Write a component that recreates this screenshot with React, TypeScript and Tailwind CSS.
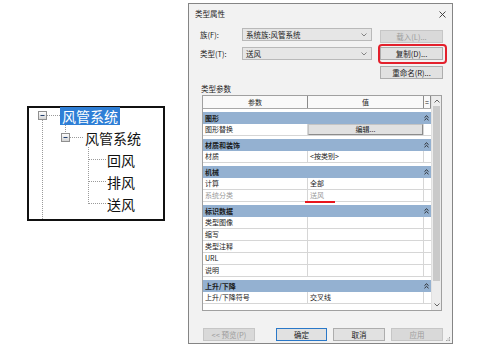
import React from "react";

function Chevron() {
  return (
    <svg width="6" height="4" viewBox="0 0 6 4">
      <path d="M0.5 0.5 L3 3 L5.5 0.5" fill="none" stroke="#6a6a6a" strokeWidth="0.8" />
    </svg>
  );
}

function Dropdown({ text }: { text: string }) {
  return (
    <div className="w-[130px] h-[13px] border border-[#b9b9b9] bg-[#e6e6e6] flex items-center justify-between pl-[3px] pr-[4px] text-[7.5px] leading-none">
      <span>{text}</span>
      <Chevron />
    </div>
  );
}

function Btn({
  children,
  disabled,
  primary,
  w,
}: {
  children: React.ReactNode;
  disabled?: boolean;
  primary?: boolean;
  w: string;
}) {
  const base = "h-[13px] flex items-center justify-center text-[7.5px] leading-none border ";
  const style = disabled
    ? "bg-[#d9d9d9] border-[#c6c6c6] text-[#9c9c9c]"
    : primary
    ? "bg-[#e1e1e1] border-[#2a78c8] text-[#1a1a1a]"
    : "bg-[#e1e1e1] border-[#adadad] text-[#1a1a1a]";
  return <div className={base + style + " " + w}>{children}</div>;
}

function Collapse() {
  return (
    <svg width="5" height="6" viewBox="0 0 5 6">
      <path d="M0.5 2.6 L2.5 0.8 L4.5 2.6" fill="none" stroke="#1f1f1f" strokeWidth="0.9" />
      <path d="M0.5 5.2 L2.5 3.4 L4.5 5.2" fill="none" stroke="#1f1f1f" strokeWidth="0.9" />
    </svg>
  );
}

function Group({ label }: { label: string }) {
  return (
    <div className="mt-[3px] h-[12px] bg-[#94b1d1] flex items-center justify-between pl-[2px] pr-[2px] text-[7px] font-bold leading-none text-[#1a1a1a]">
      <span>{label}</span>
      <Collapse />
    </div>
  );
}

function Row({
  p,
  v,
  gray,
  mark,
  edit,
}: {
  p: string;
  v?: string;
  gray?: boolean;
  mark?: boolean;
  edit?: boolean;
}) {
  return (
    <div className="h-[12px] flex border-b border-[#d6d6d6] bg-white text-[7px] leading-none">
      <div
        className={
          "w-[105px] border-r border-[#d6d6d6] pl-[2px] flex items-center " +
          (gray ? "text-[#9a9a9a]" : "text-[#1a1a1a]")
        }
      >
        {p}
      </div>
      <div className="w-[116px] border-r border-[#d6d6d6] relative flex items-center">
        {edit ? (
          <div className="w-full h-full bg-[#e1e1e1] border border-[#c4c4c4] border-r-[#8c8c8c] border-b-[#8c8c8c] flex items-center justify-center text-[#1a1a1a]">
            编辑...
          </div>
        ) : (
          <span className={"pl-[2px] " + (gray ? "text-[#9a9a9a]" : "text-[#1a1a1a]")}>{v}</span>
        )}
        {mark && <span className="absolute left-[-3px] bottom-[-2px] w-[30px] h-[2px] bg-[#e8151c]" />}
      </div>
      <div className="w-[7px]" />
    </div>
  );
}

function Tree() {
  const dot = { stroke: "#9a9a9a", strokeWidth: 1, strokeDasharray: "1 1" };
  return (
    <div className="relative w-[138px] h-[115px] border-2 border-[#111] bg-white">
      <svg className="absolute left-0 top-0" width="134" height="111">
        <defs>
          <linearGradient id="mb" x1="0" y1="0" x2="0" y2="1">
            <stop offset="0" stopColor="#ffffff" />
            <stop offset="1" stopColor="#d2d2d2" />
          </linearGradient>
        </defs>
        <line x1="13.5" y1="12" x2="13.5" y2="111" {...dot} />
        <line x1="18" y1="7.5" x2="31" y2="7.5" {...dot} />
        <line x1="36.5" y1="17" x2="36.5" y2="25" {...dot} />
        <line x1="41" y1="29.5" x2="55" y2="29.5" {...dot} />
        <line x1="59.5" y1="39" x2="59.5" y2="96" {...dot} />
        <line x1="60" y1="51.5" x2="77" y2="51.5" {...dot} />
        <line x1="60" y1="73.5" x2="77" y2="73.5" {...dot} />
        <line x1="60" y1="95.5" x2="77" y2="95.5" {...dot} />
        <rect x="9.5" y="3.5" width="8" height="8" fill="url(#mb)" stroke="#8f8f8f" />
        <line x1="11.5" y1="7.5" x2="15.5" y2="7.5" stroke="#24416e" strokeWidth="1" />
        <rect x="32.5" y="25.5" width="8" height="8" fill="url(#mb)" stroke="#8f8f8f" />
        <line x1="34.5" y1="29.5" x2="38.5" y2="29.5" stroke="#24416e" strokeWidth="1" />
      </svg>
      <div className="relative flex flex-col -mt-[3px] text-[14px] leading-none text-[#111]">
        <div className="h-[22px] flex items-center">
          <div className="ml-[31px] w-[60px] h-[18px] bg-[#2f7fd6] text-white flex items-center justify-center">
            风管系统
          </div>
        </div>
        <div className="h-[22px] flex items-center pl-[56px]">风管系统</div>
        <div className="h-[22px] flex items-center pl-[78px]">回风</div>
        <div className="h-[22px] flex items-center pl-[78px]">排风</div>
        <div className="h-[22px] flex items-center pl-[78px]">送风</div>
      </div>
    </div>
  );
}

export default function App() {
  return (
    <div className="w-[481px] h-[353px] bg-white flex font-['Noto_Sans_CJK_SC','Noto_Sans',sans-serif] overflow-hidden">
      <div className="w-[188px] pt-[106px] pl-[27px]">
        <Tree />
      </div>

      <div className="mt-[3px] w-[265px] h-[341px] border border-[#858585] bg-[#f2f2f2] flex flex-col relative text-[#1a1a1a]">
        {/* title bar */}
        <div className="h-[20px] flex items-center justify-between pl-[6px] pr-[6px] text-[7.5px] leading-none">
          <span>类型属性</span>
          <svg width="7" height="7" viewBox="0 0 7 7">
            <path d="M0.5 0.5 L6.5 6.5 M6.5 0.5 L0.5 6.5" stroke="#333" strokeWidth="0.9" />
          </svg>
        </div>

        {/* top controls */}
        <div className="flex">
          <div className="flex flex-col pl-[11px]">
            <div className="mt-[4px] h-[13px] flex items-center">
              <span className="w-[42px] text-[7.5px] leading-none">族(F):</span>
              <Dropdown text="系统族:风管系统" />
            </div>
            <div className="mt-[6px] h-[13px] flex items-center">
              <span className="w-[42px] text-[7.5px] leading-none">类型(T):</span>
              <Dropdown text="送风" />
            </div>
          </div>
          <div className="ml-[8px] flex flex-col">
            <div className="mt-[6px]">
              <Btn disabled w="w-[63px] h-[12px]">载入(L)...</Btn>
            </div>
            <div className="mt-[4px] relative">
              <Btn w="w-[63px] h-[12px]">复制(D)...</Btn>
              <span className="absolute -left-[2px] -top-[3px] -right-[4px] -bottom-[4px] border-2 border-[#e3202c] rounded-[4px]" />
            </div>
            <div className="mt-[6px]">
              <Btn w="w-[63px] h-[12px]">重命名(R)...</Btn>
            </div>
          </div>
        </div>

        <div className="mt-[5px] h-[10px] pl-[12px] flex items-center text-[7.5px] leading-none">类型参数</div>

        {/* table */}
        <div className="mt-[1px] ml-[13px] w-[240px] h-[216px] border border-[#a0a0a0] bg-white flex">
          <div className="w-[228px] flex flex-col">
            <div className="h-[13px] flex bg-[#f9f9f9] border-b border-[#a8a8a8] text-[7px] leading-none">
              <div className="w-[105px] border-r border-[#8a8a8a] flex items-center justify-center">参数</div>
              <div className="w-[116px] border-r border-[#8a8a8a] flex items-center justify-center">值</div>
              <div className="w-[7px] border-r border-[#8a8a8a] flex items-center justify-center text-[7px]">=</div>
            </div>
            <Group label="图形" />
            <Row p="图形替换" edit />
            <Group label="材质和装饰" />
            <Row p="材质" v="<按类别>" />
            <Group label="机械" />
            <Row p="计算" v="全部" />
            <Row p="系统分类" v="送风" gray mark />
            <Group label="标识数据" />
            <Row p="类型图像" />
            <Row p="缩写" />
            <Row p="类型注释" />
            <Row p="URL" />
            <Row p="说明" />
            <Group label="上升/下降" />
            <Row p="上升/下降符号" v="交叉线" />
          </div>
          <div className="w-[10px] bg-[#ececec] border-l border-[#e0e0e0] flex flex-col">
            <div className="h-[10px] flex items-center justify-center">
              <svg width="6" height="4" viewBox="0 0 6 4">
                <path d="M0.5 3.5 L3 1 L5.5 3.5" fill="none" stroke="#555" strokeWidth="0.9" />
              </svg>
            </div>
            <div className="mx-[1px] h-[175px] bg-[#c9c9c9]" />
            <div className="flex-1" />
            <div className="h-[10px] flex items-center justify-center">
              <svg width="6" height="4" viewBox="0 0 6 4">
                <path d="M0.5 0.5 L3 3 L5.5 0.5" fill="none" stroke="#555" strokeWidth="0.9" />
              </svg>
            </div>
          </div>
        </div>

        {/* bottom buttons */}
        <div className="mt-[17px] pl-[14px] flex">
          <Btn disabled w="w-[52px]">{"<< 预览(P)"}</Btn>
          <div className="ml-[21px]">
            <Btn primary w="w-[51px]">确定</Btn>
          </div>
          <div className="ml-[6px]">
            <Btn w="w-[52px]">取消</Btn>
          </div>
          <div className="ml-[6px]">
            <Btn disabled w="w-[52px]">应用</Btn>
          </div>
        </div>

        <svg className="absolute right-[1px] bottom-[1px]" width="5" height="5" viewBox="0 0 5 5">
          <rect x="3" y="0" width="1" height="1" fill="#a0a0a0" />
          <rect x="1.5" y="1.5" width="1" height="1" fill="#a0a0a0" />
          <rect x="3" y="1.5" width="1" height="1" fill="#a0a0a0" />
          <rect x="0" y="3" width="1" height="1" fill="#a0a0a0" />
          <rect x="1.5" y="3" width="1" height="1" fill="#a0a0a0" />
          <rect x="3" y="3" width="1" height="1" fill="#a0a0a0" />
        </svg>
      </div>
    </div>
  );
}
